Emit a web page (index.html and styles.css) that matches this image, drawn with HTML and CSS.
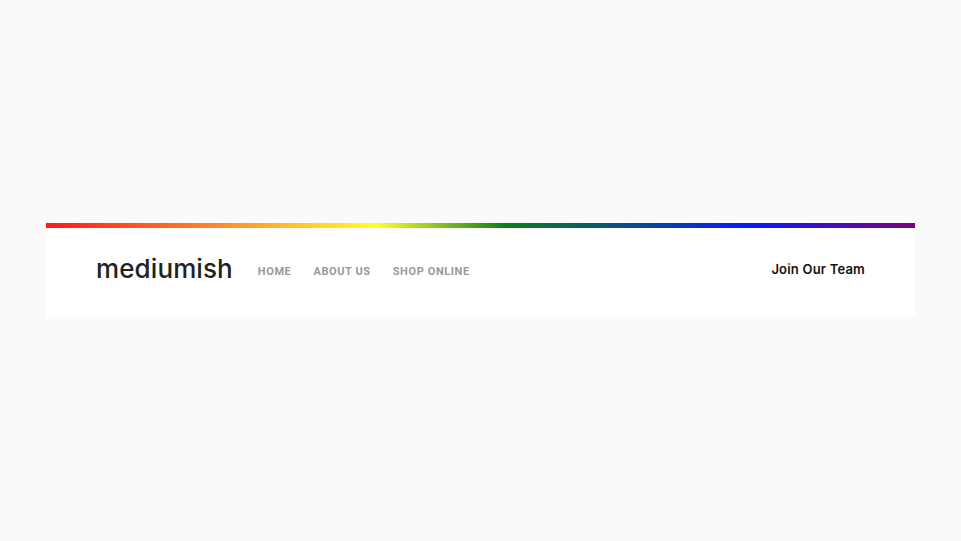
FILE: index.html
```html
<!DOCTYPE html>
<html>
<head>
<meta charset="utf-8">
<link rel="stylesheet" href="styles.css">
</head>
<body>
<div class="page">
  <header class="header">
    <div class="rainbow"></div>
    <nav class="bar">
      <div class="left">
        <a class="logo" href="#">mediumish</a>
        <ul class="menu">
          <li><a href="#">HOME</a></li>
          <li><a href="#">ABOUT US</a></li>
          <li><a href="#">SHOP ONLINE</a></li>
        </ul>
      </div>
      <a class="join" href="#">Join Our Team</a>
    </nav>
  </header>
</div>
</body>
</html>
```
FILE: styles.css
```css
html, body {
  margin: 0;
  padding: 0;
  background: #fafafa;
}
body {
  font-family: Inter, "Noto Sans", "Liberation Sans", sans-serif;
}
.page {
  padding: 223px 46px 0 46px;
}
.header {
  background: #ffffff;
}
.rainbow {
  height: 5px;
  background: linear-gradient(to right, #ff1a1a 0%, #ff8a2a 20%, #ffff2a 38%, #0a7f1a 53%, #0a1aff 81%, #800080 100%);
}
.bar {
  height: 89px;
  padding: 0 50px 8px 50px;
  display: flex;
  align-items: center;
  justify-content: space-between;
  box-sizing: border-box;
}
.left {
  display: flex;
  align-items: center;
}
.logo {
  font-size: 26px;
  color: #222;
  text-decoration: none;
  font-weight: 500;
  letter-spacing: 0.1px;
}
.menu {
  list-style: none;
  display: flex;
  margin: 0 0 0 25px;
  padding: 0;
  gap: 22px;
}
.menu a {
  font-family: Roboto, "Liberation Sans", sans-serif;
  font-size: 11px;
  font-weight: 700;
  color: #999;
  text-decoration: none;
  letter-spacing: 0.6px;
}
.join {
  font-size: 13px;
  font-weight: 600;
  color: #111;
  text-decoration: none;
  letter-spacing: 0.2px;
}
```
